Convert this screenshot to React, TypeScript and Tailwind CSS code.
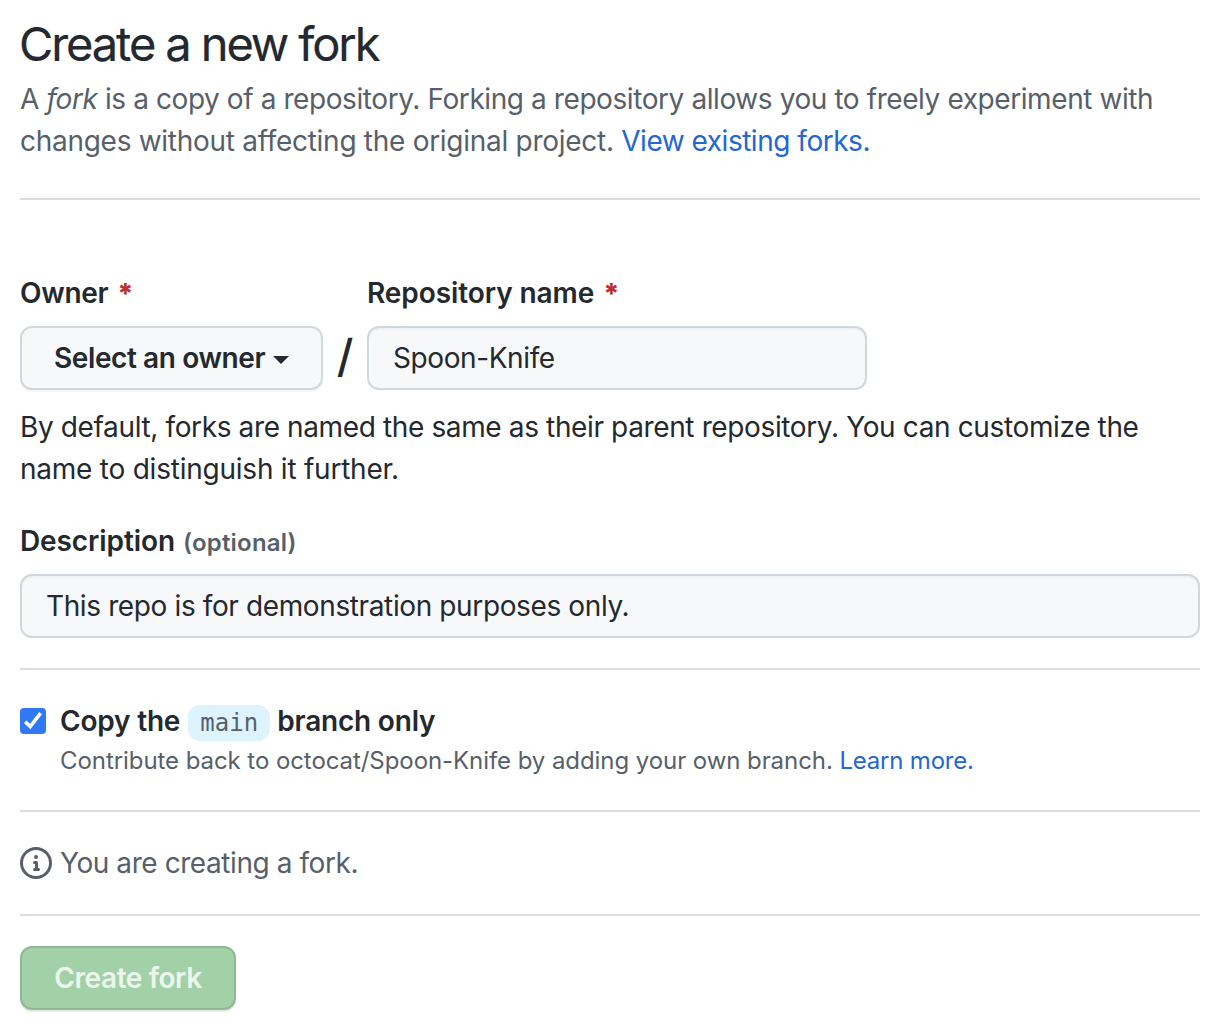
import React from "react";

function Rule({ className }: { className: string }) {
  return <hr className={"h-[2px] border-0 bg-[#d8dee4] " + className} />;
}

function Required() {
  return <span className="ml-[9px] inline-block translate-y-px font-extrabold text-[#c0302f]">*</span>;
}

export default function App() {
  return (
    <main className="h-[1034px] w-[1220px] overflow-hidden bg-white px-5 pt-4 font-[Inter,sans-serif] text-[28px] leading-[42px] text-[#24292f]">
      <h1 className="-ml-px whitespace-nowrap text-[47px] font-normal leading-[55px] tracking-[-2.1px] [-webkit-text-stroke:0.2px_#24292f]">Create a new fork</h1>
      <p className="mt-[7px] whitespace-nowrap tracking-[-0.415px] text-[#57606a]">
        A <i>fork</i> is a copy of a repository. Forking a repository allows you to freely experiment with
        <br />
        <span className="tracking-[-0.28px]">changes without affecting the original project. </span>
        <a className="tracking-[-0.48px] text-[#2466d3]">View existing forks.</a>
      </p>
      <Rule className="mt-[36px]" />

      <form className="mt-[72px]" onSubmit={(e) => e.preventDefault()}>
        <div className="flex">
          <div className="w-[303px]">
            <label className="block h-[42px] whitespace-nowrap font-semibold tracking-[-0.3px]">Owner<Required /></label>
            <button type="button" className="mt-3 flex h-16 w-full items-center rounded-[12px] border-2 border-[#d3d8dd] bg-[#f6f8fa] pl-8 font-semibold tracking-[-0.4px] shadow-[0_2px_0_rgba(27,31,36,0.04)]">
              Select an owner
              <span className="ml-2 mt-[3px] border-x-8 border-t-8 border-x-transparent border-t-[#24292f]" />
            </button>
          </div>
          <span className="flex w-[44px] items-end justify-center pb-1 text-[45px] font-medium leading-[60px]">/</span>
          <div className="w-[500px]">
            <label className="block h-[42px] whitespace-nowrap font-semibold tracking-[-0.08px]">Repository name<Required /></label>
            <input readOnly value="Spoon-Knife" className="mt-3 block h-16 w-full rounded-[12px] border-2 border-[#d0d7de] bg-[#f6f8fa] px-6 tracking-[-0.4px] shadow-[inset_0_2px_0_rgba(208,215,222,0.2)] outline-none" />
          </div>
        </div>
        <p className="mt-4 whitespace-nowrap tracking-[-0.37px]">
          By default, forks are named the same as their parent repository. You can customize the
          <br />
          <span className="tracking-[-0.23px]">name to distinguish it further.</span>
        </p>
        <label className="mt-[30px] flex h-[42px] items-baseline whitespace-nowrap font-semibold tracking-[-0.1px]">
          Description <span className="ml-2 text-[24px] tracking-[0.2px] text-[#57606a]">(optional)</span>
        </label>
        <input readOnly value="This repo is for demonstration purposes only." className="mt-3 block h-16 w-full rounded-[12px] border-2 border-[#d0d7de] bg-[#f6f8fa] px-6 tracking-[-0.38px] shadow-[inset_0_2px_0_rgba(208,215,222,0.2)] outline-none" />
        <Rule className="mt-[30px]" />

        <div className="mt-[30px] flex">
          <span role="checkbox" aria-checked="true" className="mt-2 flex h-[26px] w-[26px] items-center justify-center rounded-[4px] bg-[#2f78f6]">
            <svg width="26" height="26" viewBox="0 0 26 26" fill="none" stroke="white" strokeWidth="3.6" strokeLinejoin="miter"><path d="M5.2 13.8 10.2 18.6 20.6 5.2" /></svg>
          </span>
          <div className="ml-[14px] whitespace-nowrap">
            <div className="flex h-[42px] items-center font-semibold tracking-[-0.2px]">
              Copy the
              <code className="ml-2 mr-[7px] mt-[4px] flex h-9 w-[82px] items-center justify-center rounded-[12px] bg-[#ddf4ff] font-['DejaVu_Sans_Mono',monospace] text-[24px] font-normal tracking-normal text-[#57606a]">main</code>
              branch only
            </div>
            <p className="pt-px text-[24px] leading-[36px] tracking-[-0.07px] text-[#57606a]">
              Contribute back to octocat/Spoon-Knife by adding your own branch. <a className="tracking-[-0.2px] text-[#2466d3]">Learn more.</a>
            </p>
          </div>
        </div>
        <Rule className="mt-[31px]" />

        <p className="mt-[30px] flex items-center tracking-[-0.43px] text-[#57606a]">
          <svg className="mr-2" width="32" height="32" viewBox="0 0 16 16" fill="currentColor"><path d="M0 8a8 8 0 1 1 16 0A8 8 0 0 1 0 8Zm8-6.5a6.5 6.5 0 1 0 0 13 6.5 6.5 0 0 0 0-13ZM6.5 7.75A.75.75 0 0 1 7.25 7h1a.75.75 0 0 1 .75.75v2.75h.25a.75.75 0 0 1 0 1.5h-2a.75.75 0 0 1 0-1.5h.25v-2h-.25a.75.75 0 0 1-.75-.75ZM8 6a1 1 0 1 1 0-2 1 1 0 0 1 0 2Z" /></svg>
          You are creating a fork.
        </p>
        <Rule className="mt-[30px]" />
        <button className="mt-[30px] block h-16 w-[216px] whitespace-nowrap rounded-[12px] border-2 border-[#8fb996] bg-[#a2d1a8] font-semibold tracking-[-0.4px] text-[#ecf6ee] shadow-[0_2px_0_rgba(27,31,36,0.1)]">Create fork</button>
      </form>
    </main>
  );
}
